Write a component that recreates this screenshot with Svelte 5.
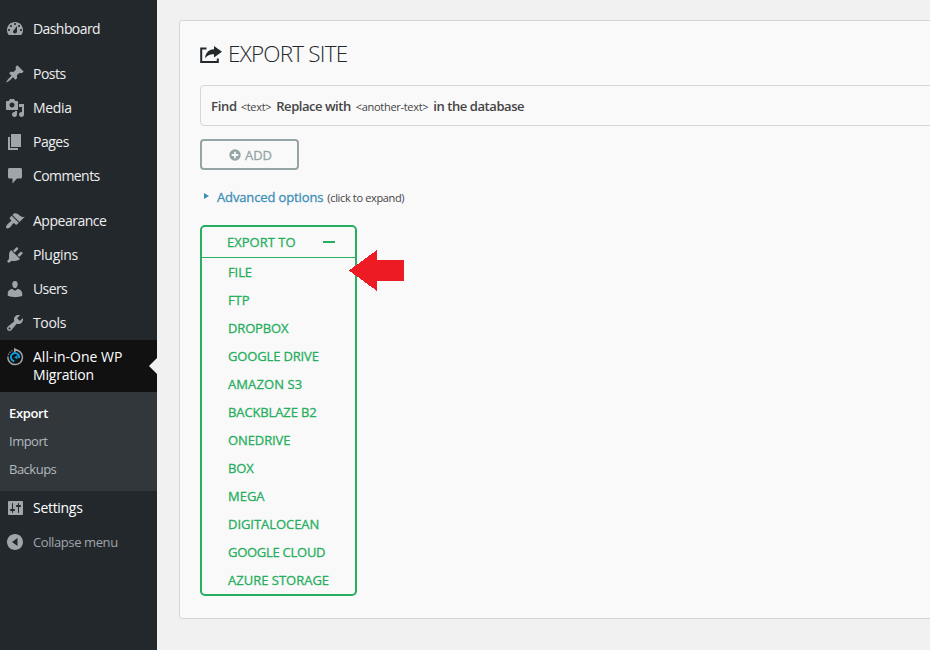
<script>
  const groups = [
    [{ label: 'Dashboard', icon: 'dashboard', ls: -0.58 }],
    [
      { label: 'Posts', icon: 'post', ls: -0.5 },
      { label: 'Media', icon: 'media', ls: -0.35 },
      { label: 'Pages', icon: 'page', ls: -0.5 },
      { label: 'Comments', icon: 'comments', ls: -0.58 }
    ],
    [
      { label: 'Appearance', icon: 'appearance', ls: -0.48 },
      { label: 'Plugins', icon: 'plugins', ls: -0.3 },
      { label: 'Users', icon: 'users', ls: -0.6 },
      { label: 'Tools', icon: 'tools', ls: -0.35 }
    ]
  ];

  const paths = {
    dashboard:
      'M3.76 16h12.48c1.1-1.37 1.76-3.11 1.76-5 0-4.42-3.58-8-8-8s-8 3.58-8 8c0 1.89.66 3.63 1.76 5zM10 4c.55 0 1 .45 1 1s-.45 1-1 1-1-.45-1-1 .45-1 1-1zM6 6c.55 0 1 .45 1 1s-.45 1-1 1-1-.45-1-1 .45-1 1-1zm8 0c.55 0 1 .45 1 1s-.45 1-1 1-1-.45-1-1 .45-1 1-1zm-5.400 5.550L12 7v5.500c0 1.100-.9 2-2 2s-2-.9-2-2c0-.4.200-.7.600-.95zM4 10c.55 0 1 .45 1 1s-.45 1-1 1-1-.45-1-1 .45-1 1-1zm12 0c.55 0 1 .45 1 1s-.45 1-1 1-1-.45-1-1 .45-1 1-1z',
    post: 'M10.44 3.02l1.82-1.82 6.36 6.35-1.83 1.82c-1.05-.68-2.48-.57-3.41.36l-.75.75c-.92.93-1.04 2.35-.35 3.41l-1.83 1.82-2.41-2.41-2.8 2.79c-.42.42-3.38 2.71-3.8 2.29s1.86-3.39 2.28-3.81l2.79-2.79L4.1 9.36l1.83-1.82c1.05.69 2.48.57 3.4-.36l.75-.75c.93-.92 1.05-2.35.36-3.41z',
    media:
      'M13 11V4c0-.55-.45-1-1-1h-1.67L9 1H5L3.67 3H2c-.55 0-1 .45-1 1v7c0 .55.45 1 1 1h10c.55 0 1-.45 1-1zM7 4.5c1.38 0 2.5 1.12 2.5 2.5S8.38 9.5 7 9.5 4.500 8.38 4.500 7 5.620 4.500 7 4.500zM14 6h5v10.500c0 1.380-1.120 2.500-2.500 2.500S14 17.880 14 16.500s1.120-2.500 2.500-2.500c.17 0 .34.02.5.05V9h-3V6zm-4 8.050V13h2v3.500c0 1.380-1.120 2.500-2.500 2.500S7 17.880 7 16.500 8.120 14 9.500 14c.17 0 .34.02.5.05z',
    page: 'M6 15V2h10v13H6zm-1 1h8v2H3V5h2v11z',
    comments:
      'M4.500 2h11c.8 0 1.500.7 1.500 1.500v7.500c0 .8-.7 1.500-1.500 1.500H12l-4.500 5v-5h-3C3.700 12.500 3 11.800 3 11V3.500C3 2.700 3.700 2 4.500 2z',
    appearance:
      'M14.480 11.060L7.410 3.990l1.500-1.500c.5-.56 2.300-.47 3.510.32 1.210.8 1.430 1.280 2.910 2.100 1.180.64 2.450 1.260 4.450.85zm-.71.71L6.700 4.700 4.930 6.470c-.39.39-.39 1.020 0 1.410l1.060 1.060c.39.39.39 1.030 0 1.420-.6.6-1.430 1.110-2.210 1.690-.35.26-.7.53-1.010.84C1.430 14.230.4 16.080 1.400 17.070c.99 1 2.840-.03 4.180-1.360.31-.31.58-.66.85-1.020.57-.78 1.080-1.610 1.690-2.210.39-.39 1.020-.39 1.410 0l1.060 1.060c.39.39 1.020.39 1.410 0z',
    plugins:
      'M13.110 4.360L9.870 7.600 8 5.730l3.240-3.240c.35-.34 1.050-.2 1.560.32.52.51.66 1.210.31 1.550zm-8 1.770l.91-1.120 9.010 9.010-1.190.84c-.71.71-2.630 1.160-3.820 1.160H6.140L4.900 17.260c-.59.59-1.540.59-2.120 0-.59-.58-.59-1.530 0-2.120l1.240-1.240v-3.880c0-1.130.4-3.190 1.090-3.890zm7.260 3.970l3.240-3.240c.34-.35 1.040-.21 1.550.31.52.51.66 1.210.31 1.550l-3.240 3.250z',
    users:
      'M10 9.250c-2.270 0-2.730-3.440-2.730-3.440C7 4.020 7.820 2 9.970 2c2.160 0 2.980 2.020 2.710 3.810 0 0-.41 3.440-2.680 3.440zm0 2.570L12.720 10c2.390 0 4.520 2.330 4.520 4.530v2.490s-3.650 1.130-7.240 1.130c-3.650 0-7.240-1.130-7.240-1.130v-2.490c0-2.250 1.940-4.480 4.470-4.480z',
    tools:
      'M16.680 9.770c-1.340 1.340-3.300 1.670-4.950.99l-5.410 6.520c-.99.99-2.590.99-3.580 0s-.99-2.590 0-3.570l6.520-5.420c-.68-1.650-.35-3.610.99-4.950 1.280-1.280 3.120-1.620 4.720-1.060l-2.890 2.890 2.820 2.820 2.860-2.870c.53 1.580.18 3.390-1.080 4.650zM3.810 16.210c.4.39 1.040.39 1.430 0 .4-.4.4-1.040 0-1.430-.39-.4-1.030-.4-1.430 0-.39.39-.39 1.030 0 1.430z',
    settings:
      'M18 16V4c0-.55-.45-1-1-1H4c-.55 0-1 .45-1 1v12c0 .55.45 1 1 1h13c.55 0 1-.45 1-1zM8 11h1c.55 0 1 .45 1 1s-.45 1-1 1H8v1.500c0 .28-.22.5-.5.5s-.5-.22-.5-.5V13H6c-.55 0-1-.45-1-1s.45-1 1-1h1V5.500c0-.28.22-.5.5-.5s.5.22.5.5V11zm5-2h-1c-.55 0-1-.45-1-1s.45-1 1-1h1V5.500c0-.28.22-.5.5-.5s.5.22.5.5V7h1c.55 0 1 .45 1 1s-.45 1-1 1h-1v5.500c0 .28-.22.5-.5.5s-.5-.22-.5-.5V9z',
    collapse:
      'M10 2c4.420 0 8 3.580 8 8s-3.580 8-8 8-8-3.580-8-8 3.580-8 8-8zM12.500 6L7 10l5.500 4z'
  };

  const targets = [
    ['FILE', -0.1], ['FTP', -0.1], ['DROPBOX', -0.15], ['GOOGLE DRIVE', -0.15], ['AMAZON S3', 0.1],
    ['BACKBLAZE B2', -0.12], ['ONEDRIVE', -0.1], ['BOX', -0.1], ['MEGA', 0], ['DIGITALOCEAN', -0.05],
    ['GOOGLE CLOUD', -0.27], ['AZURE STORAGE', 0]
  ];
</script>

{#snippet icon(name)}
  <svg class="icon" viewBox="0 0 20 20"><path fill-rule="evenodd" d={paths[name]} /></svg>
{/snippet}

<div class="page">
  <nav class="sidebar">
    {#each groups as group}
      <ul class="group">
        {#each group as item}
          <li class="item">
            {@render icon(item.icon)}
            <span style="letter-spacing: {item.ls}px">{item.label}</span>
          </li>
        {/each}
      </ul>
    {/each}
    <div class="item current">
      <svg class="icon" viewBox="0 0 20 20">
        <path d="M10 3A7.300 7.300 0 1 1 2.900 9.500" fill="none" stroke="#a0a5aa" stroke-width="1.500" />
        <path d="M9 .8l4 2.300-4 2.500z" />
        <path d="M3.200 8A7.300 7.300 0 0 1 7.500 3.600" fill="none" stroke="#82878c" stroke-width="1.200" stroke-dasharray="1.500 1" />
        <path d="M9.300 14.200A4.100 4.100 0 1 1 14 11" fill="none" stroke="#0f9ee0" stroke-width="2" />
        <path d="M9 10.400l3.300-2.200.3 4z" fill="#0f9ee0" />
      </svg>
      <span>All-in-One WP<br /><span class="second">Migration</span></span>
      <i class="notch"></i>
    </div>
    <ul class="submenu">
      <li class="on">Export</li>
      <li>Import</li>
      <li>Backups</li>
    </ul>
    <div class="item settings">{@render icon('settings')}<span>Settings</span></div>
    <div class="item collapse">{@render icon('collapse')}<span>Collapse menu</span></div>
  </nav>

  <main>
    <section class="card">
      <h1>
        <svg class="share" viewBox="0 0 22 18">
          <path d="M6.500 2.500H1.200v13.500h16.600v-3.500" fill="none" stroke="#23282d" stroke-width="2" />
          <path d="M14 0l8 5.700-8 5.700V8.200C10 8 7.500 9 5 12.200 5.500 7 8.500 3.500 14 3.200z" fill="#23282d" />
        </svg>
        <span>EXPORT SITE</span>
      </h1>
      <div class="query">
        <b class="q1">Find</b><small class="s1">&lt;text&gt;</small><b class="q2">Replace with</b><small
          class="s2">&lt;another-text&gt;</small><b class="q3">in the database</b>
      </div>
      <button class="add">
        <svg viewBox="0 0 12 12">
          <circle cx="6" cy="6" r="5.700" fill="#95a5a6" />
          <path d="M6 2.700v6.600M2.700 6h6.600" stroke="#f9f9f9" stroke-width="1.800" />
        </svg>
        <span>ADD</span>
      </button>
      <div class="advanced">
        <svg viewBox="0 0 5 6"><path d="M0 0l5 3-5 3z" fill="#3d8fb8" /></svg>
        <b>Advanced options</b><small>(click to expand)</small>
      </div>
      <div class="export">
        <div class="head"><span>EXPORT TO</span><i></i></div>
        <ul>
          {#each targets as [name, ls]}
            <li style="letter-spacing: {ls}px">{name}</li>
          {/each}
        </ul>
        <svg class="arrow" viewBox="0 0 55 41" shape-rendering="crispEdges">
          <path d="M0 20.500L28 0v10h27v21H28v10z" fill="#ed1c24" />
        </svg>
      </div>
    </section>
  </main>
</div>

<style>
  :global(body) { margin: 0; overflow: hidden; }
  .page {
    display: flex;
    width: 930px;
    height: 650px;
    overflow: hidden;
    background: #f1f1f1;
    font-family: 'Open Sans', 'Noto Sans', sans-serif;
  }
  ul { list-style: none; margin: 0; padding: 0; }
  .sidebar {
    width: 157px;
    flex: none;
    box-sizing: border-box;
    padding-top: 12px;
    background: #23282d;
    color: #eee;
    font-size: 14px;
    line-height: 18px;
  }
  .group + .group { margin-top: 11px; }
  .item {
    display: flex;
    height: 34px;
    box-sizing: border-box;
    padding: 8px 0 0 5px;
    white-space: nowrap;
    letter-spacing: -0.3px;
  }
  .icon {
    width: 20px;
    height: 20px;
    flex: none;
    margin: -1px 8px 0 0;
    fill: #a0a5aa;
  }
  .current { position: relative; height: 52px; background: #111; color: #fff; letter-spacing: 0; }
  .second { letter-spacing: -0.2px; }
  .notch {
    position: absolute;
    right: 0;
    top: 18px;
    border: 8px solid transparent;
    border-left: 0;
    border-right-color: #f1f1f1;
  }
  .submenu {
    padding: 7px 0 8px 9px;
    background: #32373c;
    color: #b4b9be;
    font-size: 13px;
    line-height: 28px;
    letter-spacing: -0.5px;
  }
  .on { color: #fff; font-weight: 600; letter-spacing: -0.35px; }
  .settings { color: #fff; }
  .collapse { color: #a0a5aa; font-size: 13px; letter-spacing: -0.4px; }
  main { flex: 1; min-width: 0; padding: 20px 0 0 22px; }
  .card {
    width: 800px;
    height: 599px;
    box-sizing: border-box;
    padding: 20px;
    border: 1px solid #d6d6d6;
    border-radius: 3px;
    background: #f9f9f9;
  }
  h1 {
    display: flex;
    height: 26px;
    margin: 0;
    color: #23282d;
    font-size: 22.5px;
    font-weight: 300;
    line-height: 26px;
    letter-spacing: -0.8px;
    white-space: nowrap;
  }
  .share { width: 22px; height: 18px; margin: 5px 6px 0 0; }
  .query {
    display: flex;
    align-items: baseline;
    height: 41px;
    margin-top: 18px;
    box-sizing: border-box;
    padding-left: 10px;
    border: 1px solid #d6d6d6;
    border-radius: 4px;
    color: #444;
    font-size: 13px;
    line-height: 40px;
    white-space: nowrap;
  }
  b { font-weight: 600; }
  small { font-size: 11px; }
  .query b { letter-spacing: -0.46px; }
  .query .q1 { letter-spacing: -0.3px; }
  .query .q3 { letter-spacing: -0.43px; }
  .query small { margin: 0 4px 0 4px; letter-spacing: -0.3px; }
  .query .s2 { margin: 0 5px; }
  .query .s1 { margin-right: 5px; }
  .add {
    display: flex;
    align-items: center;
    justify-content: center;
    width: 99px;
    height: 31px;
    margin: 13px 0 0;
    padding: 0 0 0 2px;
    border: 2px solid #95a5a6;
    border-radius: 4px;
    background: transparent;
    color: #95a5a6;
    font: 400 13px 'Open Sans', sans-serif;
    -webkit-text-stroke: 0.3px currentColor;
  }
  .add svg { width: 12px; height: 12px; margin-right: 4px; }
  .advanced {
    display: flex;
    align-items: baseline;
    height: 20px;
    margin-top: 17px;
    padding-left: 4px;
    color: #444;
    line-height: 20px;
    font-size: 13px;
    white-space: nowrap;
  }
  .advanced svg { width: 5px; height: 6px; margin-right: 8px; align-self: flex-start; margin-top: 6px; }
  .advanced b {
    color: #3d8fb8;
    font-weight: 400;
    letter-spacing: -0.13px;
    margin-right: 4px;
    -webkit-text-stroke: 0.3px currentColor;
  }
  .advanced small { letter-spacing: -0.35px; }
  .export {
    position: relative;
    width: 157px;
    height: 371px;
    box-sizing: border-box;
    margin-top: 18px;
    border: 2px solid #27ae60;
    border-radius: 5px;
    color: #27ae60;
    font-size: 13px;
    white-space: nowrap;
    -webkit-text-stroke: 0.3px currentColor;
  }
  .head {
    display: flex;
    align-items: center;
    justify-content: space-between;
    height: 30px;
    padding: 0 20px 0 25px;
    border-bottom: 1px solid #27ae60;
    line-height: 30px;
  }
  .head i { width: 12px; height: 2px; background: #27ae60; }
  .export ul { padding-left: 26px; line-height: 28px; }
  .arrow { position: absolute; left: 147px; top: 23px; width: 55px; height: 41px; }
</style>
